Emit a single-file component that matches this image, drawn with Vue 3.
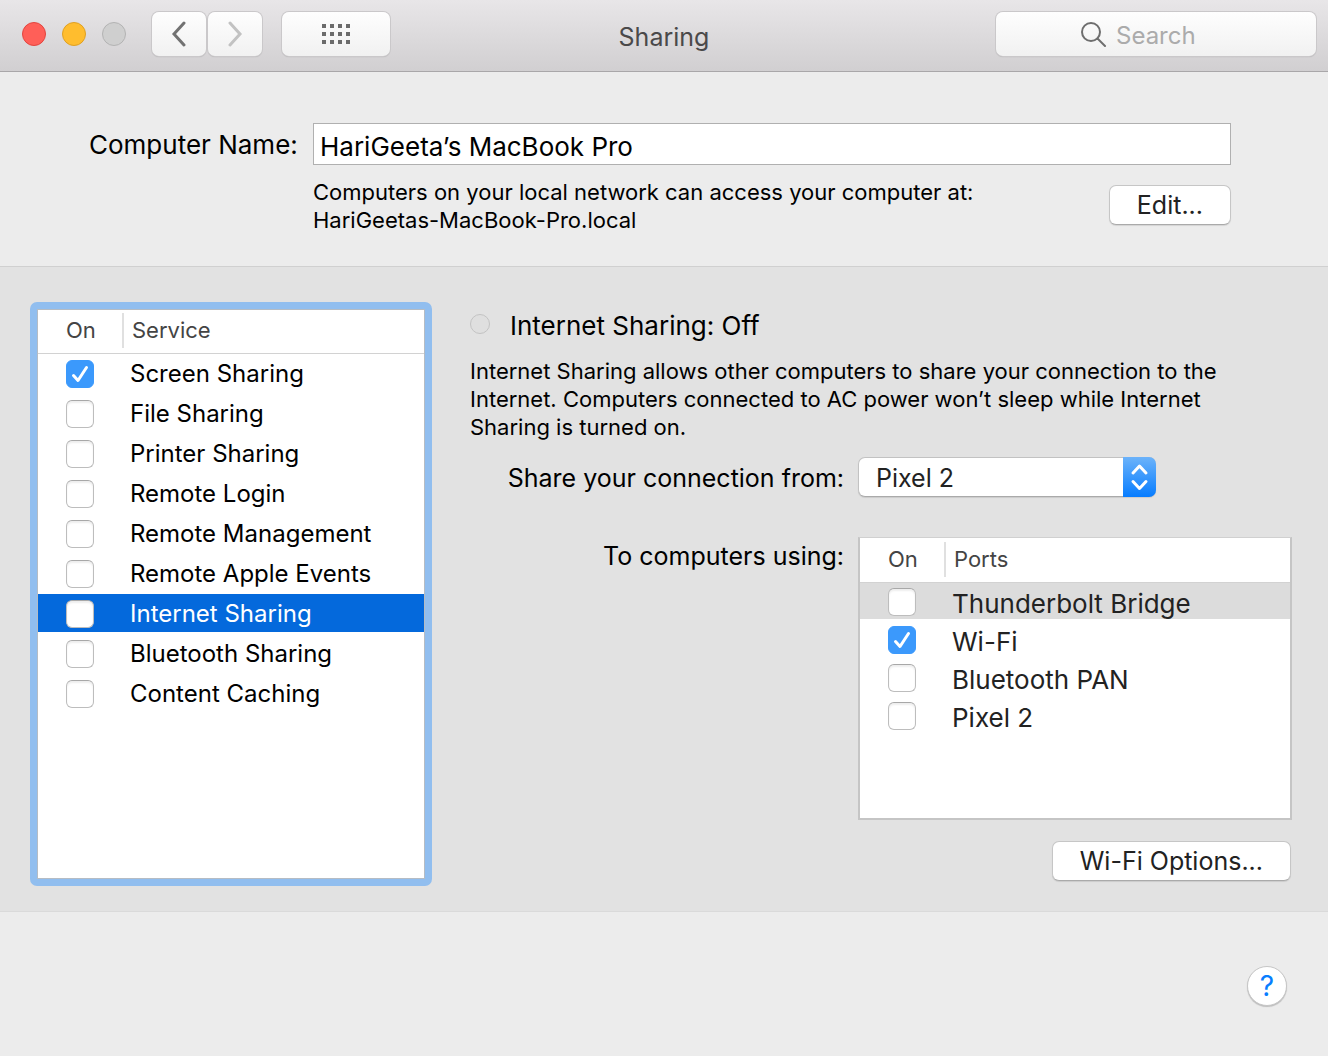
<template>
  <main class="window">
    <header class="toolbar">
      <div class="tools">
        <div class="lights">
          <button class="light close" aria-label="Close"></button>
          <button class="light minimize" aria-label="Minimize"></button>
          <button class="light zoom" aria-label="Zoom" disabled></button>
        </div>
        <nav class="history">
          <button class="tool" aria-label="Back">
            <svg width="16" height="26" viewBox="0 0 16 26"><path d="M13 2 3 13l10 11" /></svg>
          </button>
          <button class="tool" aria-label="Forward" disabled>
            <svg width="16" height="26" viewBox="0 0 16 26"><path d="m3 2 10 11L3 24" /></svg>
          </button>
        </nav>
        <button class="tool all" aria-label="Show All">
          <svg class="dots" width="28" height="20" viewBox="0 0 28 20">
            <template v-for="y in 3" :key="y">
              <rect v-for="x in 4" :key="x" :x="(x - 1) * 8" :y="(y - 1) * 8" width="4" height="4" />
            </template>
          </svg>
        </button>
      </div>
      <h1>Sharing</h1>
      <label class="search">
        <svg width="26" height="26" viewBox="0 0 26 26">
          <circle cx="10" cy="11" r="9" />
          <path d="m16.500 17.500 7.500 7.500" />
        </svg>
        <input v-model="query" type="text" placeholder="Search" aria-label="Search" />
      </label>
    </header>

    <section class="identity">
      <label for="computer-name">Computer Name:</label>
      <input id="computer-name" v-model="computerName" type="text" />
      <div class="address">
        <p>Computers on your local network can access your computer at:<br />HariGeetas-MacBook-Pro.local</p>
        <button class="push">Edit...</button>
      </div>
    </section>

    <section class="sharing">
      <div class="services">
        <table>
          <thead>
            <tr><th class="on">On</th><th><span>Service</span></th></tr>
          </thead>
          <tbody>
            <tr
              v-for="(s, i) in services"
              :key="s.name"
              :class="{ selected: s.name === selected }"
              @click="selected = s.name"
            >
              <td class="on">
                <span class="check">
                  <input :id="'service-' + i" v-model="s.on" type="checkbox" />
                  <svg v-if="s.on" width="28" height="28" viewBox="0 0 28 28"><path d="m7.500 15.500 4.500 5L20.500 7.500" /></svg>
                </span>
              </td>
              <td><label :for="'service-' + i">{{ s.name }}</label></td>
            </tr>
          </tbody>
        </table>
      </div>

      <div class="detail">
        <h2><span class="status"></span>Internet Sharing: Off</h2>
        <p class="about">
          Internet Sharing allows other computers to share your connection to the Internet.
          Computers connected to AC power won’t sleep while Internet Sharing is turned on.
        </p>
        <div class="form">
          <label for="source">Share your connection from:</label>
          <div class="popup">
            <select id="source" v-model="source">
              <option v-for="o in sources" :key="o">{{ o }}</option>
            </select>
            <svg width="33" height="40" viewBox="0 0 33 40"><path d="m10 16 6.500-7 6.500 7M10 24.500l6.500 7 6.500-7" /></svg>
          </div>

          <span class="ports-label">To computers using:</span>
          <div class="ports">
            <table>
              <thead>
                <tr><th class="on">On</th><th><span>Ports</span></th></tr>
              </thead>
              <tbody>
                <tr v-for="(p, i) in ports" :key="p.name" :class="{ current: i === 0 }">
                  <td class="on">
                    <span class="check">
                      <input :id="'port-' + i" v-model="p.on" type="checkbox" />
                      <svg v-if="p.on" width="28" height="28" viewBox="0 0 28 28"><path d="m7.500 15.500 4.500 5L20.500 7.500" /></svg>
                    </span>
                  </td>
                  <td class="port"><label :for="'port-' + i">{{ p.name }}</label></td>
                </tr>
              </tbody>
            </table>
          </div>
        </div>
        <button class="push options">Wi-Fi Options...</button>
      </div>
    </section>

    <footer>
      <button class="help" aria-label="Help">?</button>
    </footer>
  </main>
</template>

<script setup>
import { ref } from 'vue'

const query = ref('')
const computerName = ref('HariGeeta’s MacBook Pro')
const selected = ref('Internet Sharing')
const source = ref('Pixel 2')
const sources = ['Pixel 2', 'Wi-Fi', 'Bluetooth PAN', 'Thunderbolt Bridge']

const services = ref([
  { name: 'Screen Sharing', on: true },
  { name: 'File Sharing', on: false },
  { name: 'Printer Sharing', on: false },
  { name: 'Remote Login', on: false },
  { name: 'Remote Management', on: false },
  { name: 'Remote Apple Events', on: false },
  { name: 'Internet Sharing', on: false },
  { name: 'Bluetooth Sharing', on: false },
  { name: 'Content Caching', on: false },
])

const ports = ref([
  { name: 'Thunderbolt Bridge', on: false },
  { name: 'Wi-Fi', on: true },
  { name: 'Bluetooth PAN', on: false },
  { name: 'Pixel 2', on: false },
])
</script>

<style>
body { margin: 0; background: #ececec; }
</style>

<style scoped>
.window {
  display: flex;
  flex-direction: column;
  min-height: 100vh;
  background: #ececec;
  color: #000;
  font: 26px/30px Inter, "Liberation Sans", sans-serif;
}
.window * { box-sizing: border-box; }
button, input, select { font: inherit; color: inherit; margin: 0; padding: 0; }
h1, h2, p { margin: 0; font-weight: 400; }
svg { display: block; fill: none; stroke-linecap: round; }

/* toolbar */
.toolbar {
  display: grid;
  grid-template-columns: 1fr auto 1fr;
  align-items: start;
  height: 72px;
  padding: 12px 12px 0;
  border-bottom: 1px solid #a9a7a9;
  background: linear-gradient(#e8e6e8, #d1cfd1);
}
.tools { display: flex; align-items: center; padding-left: 10px; }
.lights { display: flex; gap: 16px; margin-right: 26px; }
.light { width: 24px; height: 24px; border: 1px solid; border-radius: 50%; }
.close { background: #ff5f58; border-color: #e2453f; }
.minimize { background: #ffbd2e; border-color: #dfa023; }
.zoom { background: #cfcfcf; border-color: #b3b3b3; }
.history { display: flex; gap: 2px; margin-right: 20px; }
.tool {
  display: flex;
  align-items: center;
  justify-content: center;
  width: 54px;
  height: 44px;
  border: 0;
  border-radius: 7px;
  background: linear-gradient(#fefefe, #f1f1f1);
  box-shadow: 0 0 0 1px #cac8ca, 0 1px 1px #a5a3a5;
}
.tool svg { stroke: #727272; stroke-width: 3; }
.tool:disabled svg { stroke: #c2c2c2; }
.all { width: 108px; }
.tool .dots { fill: #6b6b6b; stroke: none; }
h1 { margin-top: 10px; color: #4a494a; font-size: 25px; }
.search {
  display: flex;
  align-items: center;
  gap: 9px;
  justify-self: end;
  width: 320px;
  height: 44px;
  padding-left: 85px;
  border-radius: 7px;
  background: linear-gradient(#fefefe, #f1f1f1);
  box-shadow: 0 0 0 1px #cac8ca, 0 1px 1px #a5a3a5;
}
.search svg { flex: none; stroke: #6e6e6e; stroke-width: 2; }
.search input { flex: 1; min-width: 0; padding-top: 3px; border: 0; outline: 0; background: none; font-size: 24px; }
.search input::placeholder { color: #ababab; opacity: 1; }

/* computer name */
.identity {
  display: grid;
  grid-template-columns: 208px 1fr;
  column-gap: 16px;
  align-items: center;
  padding: 51px 97px 32px 89px;
}
.identity > label { padding-top: 2px; text-align: right; white-space: nowrap; }
.identity > input {
  height: 42px;
  padding: 5px 6px 0;
  border: 1px solid #b0b0b0;
  border-radius: 0;
  outline: 0;
  background: #fff;
}
.address {
  grid-column: 2;
  display: flex;
  justify-content: space-between;
  align-items: flex-start;
  margin-top: 13px;
}
.address p, .about { font-size: 22px; line-height: 28px; }
.push {
  height: 40px;
  padding: 0 27px;
  border: 1px solid #c6c6c6;
  border-bottom-color: #aaa;
  border-radius: 7px;
  background: #fff;
  box-shadow: 0 1px 1px rgba(0, 0, 0, .1);
  color: #222;
  font-size: 25px;
}
.address .push { margin-top: 7px; }

/* sharing */
.sharing {
  display: flex;
  gap: 38px;
  padding: 35px 36px 25px 30px;
  border-top: 1px solid #d0d0d0;
  border-bottom: 1px solid #dadada;
  background: #e2e2e2;
}
.services {
  flex: none;
  width: 402px;
  min-height: 584px;
  border: 7px solid #91beef;
  border-radius: 7px;
  background: #fff;
  box-shadow: inset 0 0 0 1px #b5bcc4;
  padding: 0 1px;
}
table { width: 100%; border-spacing: 0; font-size: 24px; }
th, td { padding: 0; text-align: left; font-weight: 400; }
th { height: 45px; padding-bottom: 2px; border-bottom: 1px solid #d2d2d2; color: #444; font-size: 22px; }
th span { display: block; padding-left: 8px; border-left: 2px solid #e0e0e0; line-height: 35px; }
td { height: 40px; padding-top: 2px; border-bottom: 2px solid transparent; background-clip: padding-box; }
td label { padding-left: 8px; }
.on { width: 84px; padding-left: 28px; }
.selected td { background-color: #0469dc; color: #fff; }
.check { display: grid; width: 28px; height: 28px; }
.check > * { grid-area: 1 / 1; }
.check input {
  appearance: none;
  width: 28px;
  height: 28px;
  border: 1px solid #bdbdbd;
  border-top-color: #a8a8a8;
  border-radius: 6px;
  background: #fff;
  box-shadow: inset 0 2px 2px #eee;
}
.check input:checked { border-color: #3b99fc; background: #3b99fc; box-shadow: none; }
.check svg { stroke: #fff; stroke-width: 3; stroke-linejoin: round; pointer-events: none; }

.detail { flex: 1; min-width: 0; display: flex; flex-direction: column; }
h2 { display: flex; align-items: flex-start; gap: 20px; margin-top: 9px; font-size: 26px; }
.status { width: 20px; height: 20px; margin-top: 3px; border: 1px solid #c3c3c3; border-radius: 50%; background: #dfdfdf; }
.about { max-width: 780px; margin-top: 16px; }
.form {
  display: grid;
  grid-template-columns: 374px 1fr;
  gap: 40px 14px;
  margin-top: 16px;
}
.form > label, .ports-label { font-size: 25px; text-align: right; white-space: nowrap; }
.form > label { align-self: center; padding-top: 2px; }
.ports-label { margin-top: 4px; }
.popup { display: grid; justify-self: start; width: 298px; }
.popup > * { grid-area: 1 / 1; }
.popup select {
  appearance: none;
  height: 40px;
  padding: 2px 40px 0 17px;
  border: 1px solid #c2c2c2;
  border-bottom-color: #aaa;
  border-radius: 7px;
  background: #fff;
  box-shadow: 0 1px 1px rgba(0, 0, 0, .1);
  color: #222;
  font-size: 25px;
}
.popup svg {
  justify-self: end;
  border-radius: 0 7px 7px 0;
  background: linear-gradient(#6cb3fa, #067cff);
  stroke: #fff;
  stroke-width: 3;
  stroke-linejoin: round;
  pointer-events: none;
}
.ports {
  height: 283px;
  border: 2px solid #c5c5c5;
  border-top: 1px solid #d0d0d0;
  background: #fff;
}
.ports td { height: 38px; color: #222; font-size: 26px; }
.ports .port { padding-top: 5px; }
.current td { background-color: #dcdcdc; }
.options { align-self: flex-end; margin: 21px 1px 0 0; }

footer { display: flex; flex: 1; justify-content: flex-end; align-items: flex-start; padding: 54px 41px 50px; }
.help {
  width: 40px;
  height: 40px;
  border: 1px solid #c6c6c6;
  border-radius: 50%;
  background: #fff;
  box-shadow: 0 1px 1px rgba(0, 0, 0, .2);
  color: #087eff;
  font-size: 28px;
}
</style>
